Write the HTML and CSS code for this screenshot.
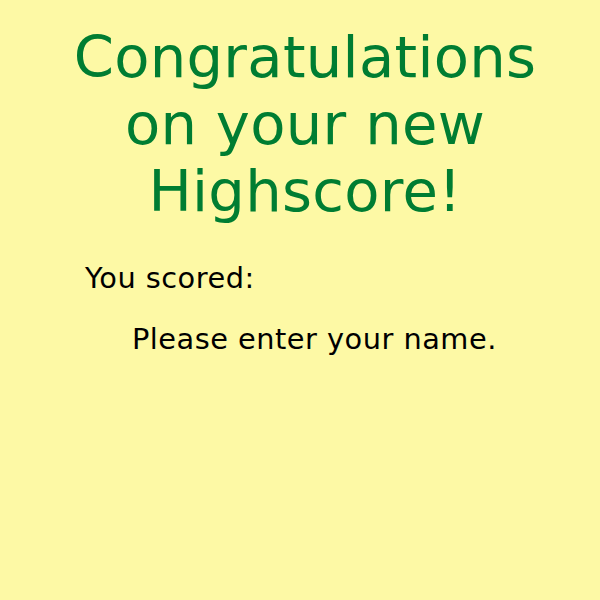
FILE: index.html
```html
<!DOCTYPE html>
<html>
<head>
<meta charset="utf-8">
<link rel="stylesheet" href="styles.css">
</head>
<body>
<div class="page">
  <h1 class="title">Congratulations on your new Highscore!</h1>
  <div class="score">You scored: <span class="value"></span></div>
  <p class="prompt">Please enter your name.</p>
</div>
</body>
</html>
```
FILE: styles.css
```css
html, body {
  margin: 0;
  padding: 0;
  background: #fdf9a5;
}
body {
  font-family: "DejaVu Sans", sans-serif;
  color: #000;
}
.page {
  padding: 24px 40px 0 50px;
}
.title {
  margin: 0;
  font-size: 57.6px;
  font-weight: normal;
  line-height: normal;
  letter-spacing: 0.3px;
  color: #007d32;
  text-align: center;
}
.score {
  margin: 36px 0 0 35px;
  font-size: 28.8px;
  letter-spacing: 0.5px;
}
.prompt {
  margin: 27px 0 0 82px;
  font-size: 28.8px;
  letter-spacing: 0.5px;
}
```
